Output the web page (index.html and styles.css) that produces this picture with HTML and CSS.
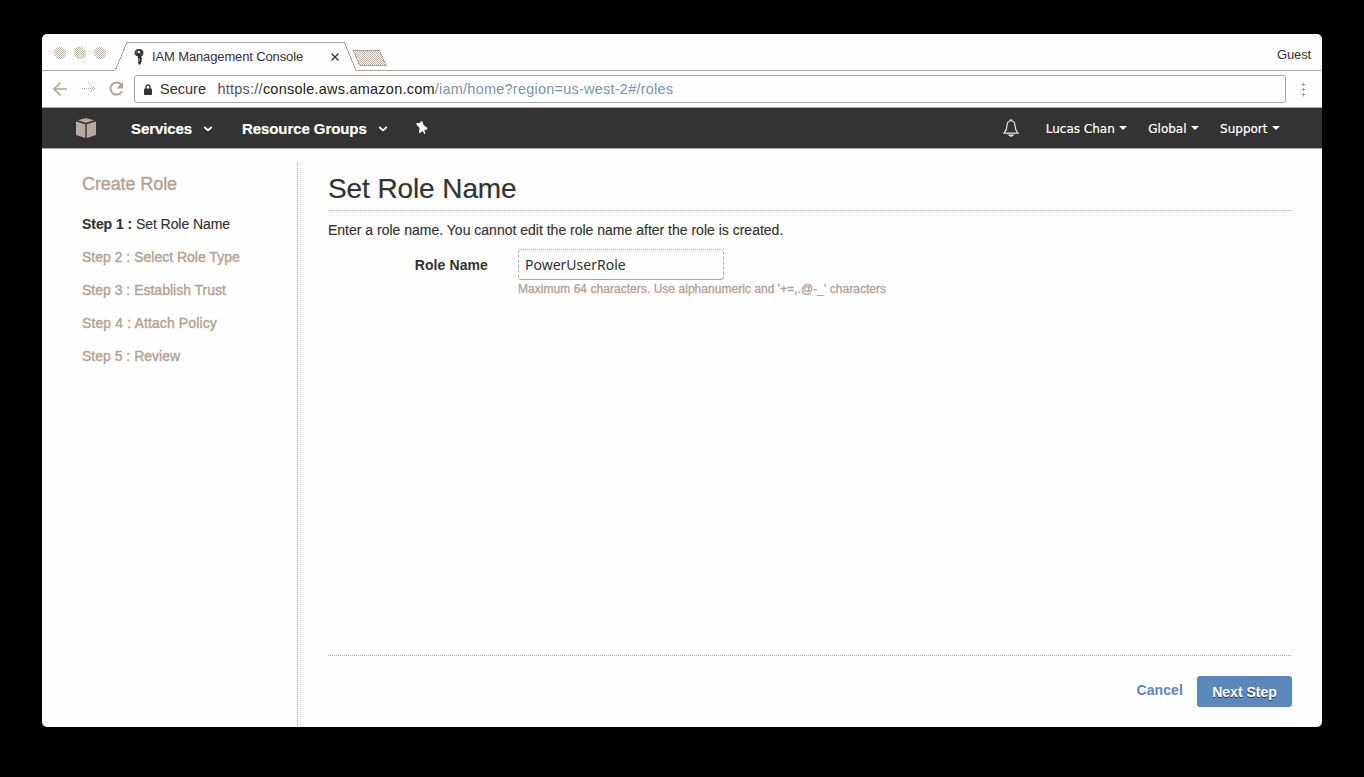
FILE: index.html
```html
<!DOCTYPE html>
<html lang="en">
<head>
<meta charset="utf-8">
<title>IAM Management Console</title>
<link rel="stylesheet" href="styles.css">
</head>
<body>
<div class="window">
  <header class="tabstrip">
    <svg class="tab-shapes" width="1280" height="37" viewBox="0 0 1280 37" fill="none" shape-rendering="crispEdges">
      <defs>
        <pattern id="dither" width="2" height="2" patternUnits="userSpaceOnUse"><path d="M0 0h1v1H0zM1 1h1v1H1z" fill="#b3a497" fill-opacity=".85"/></pattern>
      </defs>
      <g fill="url(#dither)"><circle cx="18" cy="19" r="6.200"/><circle cx="38" cy="19" r="6.200"/><circle cx="58" cy="19" r="6.200"/>
      <path d="M311.500 16.500H337.500L344 31.500H320Q318 31.500 317 29.500Z" stroke="#b3a497"/></g>
      <path d="M0 36.500H72.500Q73.500 35.500 74 34.500L85 8.500H302.500L313.500 35.500L314.500 36.500H1280" stroke="#b3a497"/>
    </svg>
    <svg class="key" width="10" height="16" viewBox="0 0 10 16"><path fill-rule="evenodd" fill="#333" d="M5 0C7.800 0 9.500 1.600 9.500 4C9.500 5.600 8.700 6.700 7.500 7.300V9L8.300 10L7 11.200L8 12.400L7 13.500V14.500L5.500 16L4 14V7.500C2 7 .5 5.800 .5 4C.5 1.600 2.300 0 5 0ZM5 1.500L3.500 3L5 4.500L6.500 3Z"/><path d="M1.500 3h2M7 5.500l1-1M5 9v4" stroke="#b3a497"/></svg>
    <span class="tab-title">IAM Management Console</span>
    <svg class="close" width="8" height="8" viewBox="0 0 8 8"><path d="M.5 .5l7 7M7.500 .5l-7 7" stroke="#333" stroke-width="1.300"/></svg>
    <span class="guest">Guest</span>
  </header>
  <div class="toolbar">
    <svg class="controls" width="74" height="20" viewBox="0 0 74 20" fill="none" stroke="#b3a497" stroke-width="1.700">
      <path d="M15 10H2M8.500 3.500L2 10L8.500 16.500"/>
      <path d="M30 9.500h1M32 9.500h1M34 9.500h1M36 9.500h1M38 9.500h1M40 9.500h1M42 9.500h1M36 3.500h1M38 5.500h1M39 7.500h1M41 8.500h1M41 10.500h1M39 11.500h1M38 13.500h1M36 15.500h1" stroke-width="1"/>
      <path d="M69 5.300A6.100 6.100 0 1 0 70 12.300" stroke-width="2"/><path d="M71 3V9.500H64.500Z" fill="#b3a497" stroke="none"/>
    </svg>
    <div class="address">
      <svg class="lock" width="8" height="11" viewBox="0 0 8 11"><path d="M2 5V3a2 2 0 0 1 4 0v2" fill="none" stroke="#333" stroke-width="1.300"/><rect y="4.500" width="8" height="6.500" rx="1" fill="#333"/></svg>
      <span class="secure">Secure</span>
      <span class="url"><span class="scheme">https://</span><span class="host">console.aws.amazon.com</span><span class="path">/iam/home?region=us-west-2#/roles</span></span>
    </div>
    <svg class="more" width="5" height="15" viewBox="0 0 5 15"><path d="M.5 2.500h4M2.500 .5v3.500M.5 7.500h4M2.500 6v3M.5 12.500h4M2.500 11v3.500" stroke="#a99d93"/></svg>
  </div>
  <nav class="nav">
    <svg class="cube" width="20" height="20" viewBox="0 0 20 20" fill="#b8a99d"><path d="M10 0L18 2.200L10 4.800L2 2.200ZM0 3.600L9.300 6.200V20L0 17ZM20 3.600L10.700 6.200V20L20 17Z"/></svg>
    <span class="menu services">Services</span>
    <svg class="chev" width="10" height="6" viewBox="0 0 10 6"><path d="M1.300 1l3.700 3.400L8.700 1" fill="none" stroke="#fff" stroke-width="1.800"/></svg>
    <span class="menu groups">Resource Groups</span>
    <svg class="chev" width="10" height="6" viewBox="0 0 10 6"><path d="M1.300 1l3.700 3.400L8.700 1" fill="none" stroke="#fff" stroke-width="1.800"/></svg>
    <svg class="pin" width="12" height="14" viewBox="0 0 12 14"><path d="M4.500 .5L6.500 .5L7.500 4L11.500 7L11 8.500L8.300 9L9.500 12.500L8.500 13L6.500 10L4 12L3 11.500L3.500 7L.5 3.500V2L4 2Z" fill="#fff"/></svg>
    <svg class="bell" width="16" height="18" viewBox="0 0 16 18" fill="none" stroke="#e8e2dc" stroke-width="1.200"><path d="M8 1.500C5 2 4 4 4 6.500C4 10 3 12 1 14.200H15C13 12 12 10 12 6.500C12 4 11 2 8 1.500Z"/><path d="M6.500 1h3M6 16h4L8 17.300Z" fill="#e8e2dc"/></svg>
    <span class="item lucas">Lucas Chan</span><i class="caret"></i>
    <span class="item global">Global</span><i class="caret"></i>
    <span class="item support">Support</span><i class="caret"></i>
  </nav>
  <div class="body">
    <aside class="sidebar">
      <h2>Create Role</h2>
      <ol>
        <li class="active"><b>Step 1 :</b> Set Role Name</li>
        <li>Step 2 : Select Role Type</li>
        <li>Step 3 : Establish Trust</li>
        <li class="policy">Step 4 : Attach Policy</li>
        <li>Step 5 : Review</li>
      </ol>
    </aside>
    <main class="main">
      <h1>Set Role Name</h1>
      <p class="intro">Enter a role name. You cannot edit the role name after the role is created.</p>
      <div class="field">
        <label for="role">Role Name</label>
        <div class="entry">
          <input id="role" type="text" value="PowerUserRole">
          <p class="help">Maximum 64 characters. Use alphanumeric and '+=,.@-_' characters</p>
        </div>
      </div>
      <footer class="actions">
        <a class="cancel">Cancel</a>
        <button class="next">Next Step</button>
      </footer>
    </main>
  </div>
</div>
</body>
</html>
```

FILE: styles.css
```css
* { box-sizing: border-box; }
body {
  margin: 0;
  height: 777px;
  padding: 34px 42px 50px;
  background: #000;
  color: #333;
  font-family: "Liberation Sans", Arial, sans-serif;
  white-space: nowrap;
  overflow: hidden;
}
svg { flex: none; display: block; }
h1, h2, p, ol { margin: 0; padding: 0; font-weight: 400; }
.window {
  display: flex;
  flex-direction: column;
  width: 1280px;
  height: 693px;
  background: #fefefe;
  border-radius: 5px;
  overflow: hidden;
}
.tabstrip {
  position: relative;
  display: flex;
  align-items: center;
  height: 37px;
  padding: 8px 11px 0 92px;
  font-size: 13px;
  letter-spacing: -.13px;
}
.tab-shapes { position: absolute; left: 0; top: 0; }
.key, .tab-title, .close, .guest { position: relative; }
.tab-title { width: 178px; margin-left: 8px; }
.close { margin-left: 1px; }
.guest { margin-left: auto; margin-top: -4px; }
.toolbar {
  display: flex;
  align-items: center;
  height: 37px;
  padding: 0 16px 0 10px;
  border-bottom: 1px solid #b3a497;
}
.address {
  display: flex;
  align-items: center;
  width: 1152px;
  height: 28px;
  margin-left: 8px;
  padding-left: 9px;
  border: 1px solid #b3a497;
  border-radius: 3px;
  font-size: 14.5px;
}
.secure { width: 57.5px; margin-left: 8px; }
.url { letter-spacing: .23px; }
.scheme { color: #555; }
.host { color: #222; }
.path { color: #8093ab; }
.more { margin-left: auto; }
.nav {
  display: flex;
  align-items: center;
  height: 41px;
  padding: 0 42px 0 34px;
  background: #333;
  border-bottom: 1px solid #b3a497;
  color: #fff;
}
.menu { font-size: 15px; font-weight: 700; letter-spacing: -.08px; -webkit-text-stroke: .2px; }
.services { width: 72px; margin-left: 35px; }
.groups { width: 136px; margin-left: 29px; }
.chev { margin-top: 2px; }
.pin { margin-left: 28px; }
.bell { margin-left: auto; margin-right: 27px; }
.item { margin-top: 1px; font: 12px "DejaVu Sans", Verdana, sans-serif; -webkit-text-stroke: .2px; }
.item + .caret { margin-left: 4.5px; }
.global, .support { margin-left: 21px; }
.caret {
  border: 4px solid transparent;
  border-top-color: #fff;
  border-bottom: 0;
}
.body { flex: 1; display: flex; padding-top: 13px; }
.sidebar {
  width: 256px;
  padding: 10px 0 0 40px;
  color: #b3a497;
  border-right: 1px dotted #a89c92;
}
.sidebar h2 { font-size: 18px; line-height: 24px; letter-spacing: -.1px; -webkit-text-stroke: .4px; }
.sidebar ol { list-style: none; margin-top: 12px; }
.sidebar li { height: 33px; font-size: 14px; line-height: 33px; -webkit-text-stroke: .4px; }
.sidebar .policy { letter-spacing: .12px; }
.sidebar .active { color: #333; letter-spacing: -.06px; -webkit-text-stroke: .15px; }
.main {
  flex: 1;
  display: flex;
  flex-direction: column;
  padding: 9px 31px 20px 30px;
}
.main h1 {
  height: 40px;
  font-size: 28px;
  line-height: 35px;
  letter-spacing: -.1px;
  border-bottom: 1px dotted #b3a497;
  -webkit-text-stroke: .2px;
}
.intro { margin-top: 10px; font-size: 14px; line-height: 18px; -webkit-text-stroke: .15px; }
.field { display: flex; margin-top: 10px; }
label { width: 190px; padding-right: 30px; text-align: right; font-size: 14px; font-weight: 700; line-height: 32px; letter-spacing: .1px; }
input {
  display: block;
  width: 206px;
  height: 31px;
  padding: 0 6px;
  border: 1px dotted #b3a497;
  border-right-style: dashed;
  border-left-style: dashed;
  border-bottom-style: solid;
  border-radius: 3px;
  background: #fefefe;
  color: #333;
  font: 14px "Noto Sans", sans-serif;
}
.help { margin-top: 2px; color: #b3a497; font-size: 12px; line-height: 15px; letter-spacing: .04px; -webkit-text-stroke: .35px; }
.actions {
  display: flex;
  height: 52px;
  margin-top: auto;
  padding-top: 20px;
  justify-content: flex-end;
  border-top: 1px dotted #b3a497;
  font-size: 14px;
  font-weight: 700;
}
.cancel { margin-right: 14px; color: #5a88bd; line-height: 28px; letter-spacing: .1px; }
.next {
  width: 95px;
  height: 31px;
  margin-right: -1px;
  padding: 1px 0 0;
  border: 0;
  border-radius: 3px;
  background: #5a88bd;
  color: #fff;
  font: 700 14px/30px "Liberation Sans", Arial, sans-serif;
  text-shadow: 0 1px 0 #333;
}
```
